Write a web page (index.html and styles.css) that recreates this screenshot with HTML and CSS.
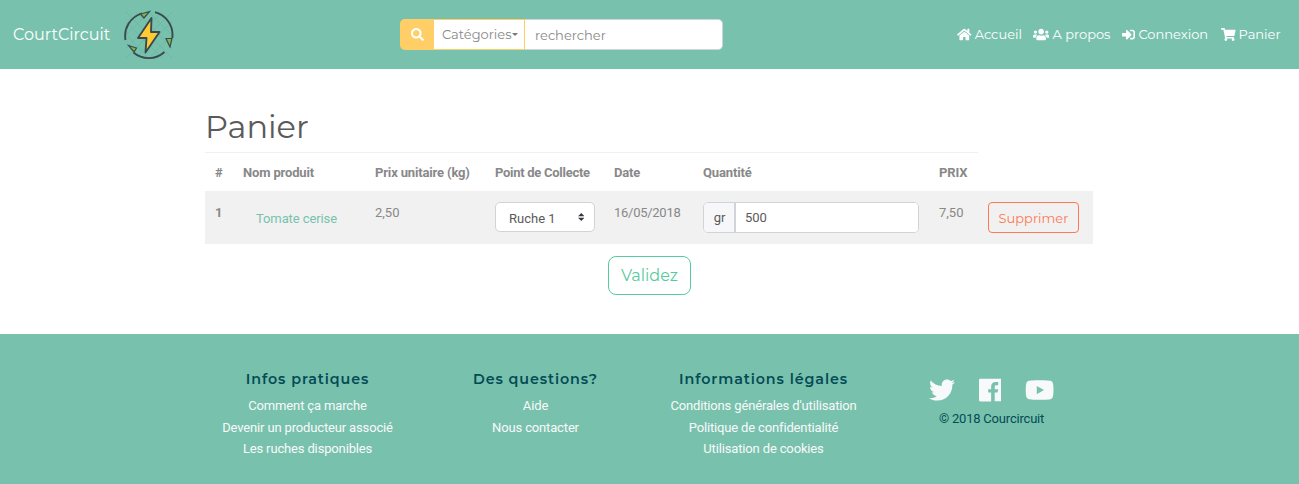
FILE: index.html
```
<!DOCTYPE html>
<html lang="fr">
<head>
<meta charset="utf-8">
<title>CourtCircuit - Panier</title>
<link rel="stylesheet" href="styles.css">
</head>
<body>
<header class="navbar">
  <a class="brand"><span class="brand-name">CourtCircuit</span>
    <svg class="logo" viewBox="0 0 50 50">
      <g class="logo-grid"><path d="M2 2L48 48M12 2L48 38M25 2L48 25M2 12L38 48M2 25L25 48M48 2L2 48M38 2L2 38M25 2L2 25M48 12L12 48M48 25L25 48"/></g>
      <g class="logo-ring"><path d="M1.500 30A23.500 23.500 0 0 1 18 3.300"/><path d="M31 2.200A23.500 23.500 0 0 1 48.300 28"/><path d="M40.500 42A23.500 23.500 0 0 1 9.500 42.500"/></g>
      <g class="logo-leaf"><path d="M16.500 4L25.500 1.500L20 8Z"/><path d="M42 28.500L48 28.500L46 37Z"/><path d="M4.500 35.500L12.500 38L10 42Z"/></g>
      <path class="logo-bolt" d="M27.500 8L14 28H22.500L21.500 42.500L35.500 22H27Z"/>
    </svg>
  </a>
  <form class="search">
    <span class="search-btn"><svg class="ico-search" viewBox="0 0 512 512"><path d="M505 442.700L405.300 343c-4.500-4.500-10.600-7-17-7H372c27.600-35.300 44-79.700 44-128C416 93.100 322.900 0 208 0S0 93.100 0 208s93.100 208 208 208c48.300 0 92.700-16.400 128-44v16.300c0 6.400 2.500 12.500 7 17l99.700 99.700c9.400 9.400 24.600 9.400 33.900 0l28.300-28.300c9.400-9.400 9.400-24.600.1-34zM208 336c-70.700 0-128-57.200-128-128 0-70.700 57.200-128 128-128 70.700 0 128 57.200 128 128 0 70.700-57.200 128-128 128z"/></svg></span>
    <span class="search-cat"><span>Catégories</span><i class="caret"></i></span>
    <input class="search-input" type="text" placeholder="rechercher">
  </form>
  <nav class="links">
    <a class="link-home"><svg viewBox="0 0 576 512"><path d="M280.370 148.260L96 300.110V464a16 16 0 0 0 16 16l112.060-.29a16 16 0 0 0 15.920-16V368a16 16 0 0 1 16-16h64a16 16 0 0 1 16 16v95.640a16 16 0 0 0 16 16.050L464 480a16 16 0 0 0 16-16V300L295.670 148.260a12.190 12.190 0 0 0-15.300 0zM571.600 251.470L488 182.560V44.050a12 12 0 0 0-12-12h-56a12 12 0 0 0-12 12v72.610L318.470 43a48 48 0 0 0-61 0L4.340 251.470a12 12 0 0 0-1.600 16.900l25.500 31A12 12 0 0 0 45.150 301l235.220-193.740a12.190 12.190 0 0 1 15.300 0L530.900 301a12 12 0 0 0 16.900-1.600l25.500-31a12 12 0 0 0-1.700-16.930z"/></svg><span>Accueil</span></a>
    <a class="link-about"><svg class="wide" viewBox="0 0 640 512"><path d="M96 224c35.300 0 64-28.700 64-64s-28.700-64-64-64-64 28.700-64 64 28.700 64 64 64zm448 0c35.300 0 64-28.700 64-64s-28.700-64-64-64-64 28.700-64 64 28.700 64 64 64zm32 32h-64c-17.600 0-33.500 7.100-45.100 18.600 40.300 22.100 68.900 62 75.100 109.400h66c17.700 0 32-14.300 32-32v-32c0-35.300-28.700-64-64-64zm-256 0c61.900 0 112-50.100 112-112S381.900 32 320 32 208 82.100 208 144s50.100 112 112 112zm76.800 32h-8.300c-20.800 10-43.900 16-68.500 16s-47.600-6-68.500-16h-8.300C179.600 288 128 339.600 128 403.200V432c0 26.500 21.500 48 48 48h288c26.500 0 48-21.500 48-48v-28.800c0-63.600-51.600-115.200-115.200-115.200zm-223.700-13.400C161.500 263.100 145.600 256 128 256H64c-35.300 0-64 28.700-64 64v32c0 17.700 14.300 32 32 32h65.900c6.300-47.400 34.900-87.300 75.200-109.400z"/></svg><span>A propos</span></a>
    <a class="link-login"><svg class="square" viewBox="0 0 512 512"><path d="M416 448h-84c-6.600 0-12-5.400-12-12v-40c0-6.600 5.400-12 12-12h84c17.700 0 32-14.300 32-32V160c0-17.700-14.300-32-32-32h-84c-6.600 0-12-5.400-12-12V76c0-6.600 5.400-12 12-12h84c53 0 96 43 96 96v192c0 53-43 96-96 96zm-47-201L201 79c-15-15-41-4.500-41 17v96H24c-13.300 0-24 10.700-24 24v96c0 13.300 10.700 24 24 24h136v96c0 21.500 26 32 41 17l168-168c9.300-9.400 9.300-24.600 0-34z"/></svg><span>Connexion</span></a>
    <a class="link-cart"><svg viewBox="0 0 576 512"><path d="M528.120 301.319l47.273-208C578.806 78.301 567.391 64 551.990 64H159.208l-9.166-44.810C147.758 8.021 137.930 0 126.529 0H24C10.745 0 0 10.745 0 24v16c0 13.255 10.745 24 24 24h69.883l70.248 343.435C147.325 417.100 136 435.222 136 456c0 30.928 25.072 56 56 56s56-25.072 56-56c0-15.674-6.447-29.835-16.824-40h209.647C430.447 426.165 424 440.326 424 456c0 30.928 25.072 56 56 56s56-25.072 56-56c0-22.172-12.888-41.332-31.579-50.405l5.517-24.276c3.413-15.018-8.002-29.319-23.403-29.319H218.117l-6.545-32h293.145c11.206 0 20.920-7.754 23.403-18.681z"/></svg><span>Panier</span></a>
  </nav>
</header>

<main class="content">
  <h1 class="title">Panier</h1>
  <table class="cart">
    <colgroup><col class="c-num"><col class="c-name"><col class="c-unit"><col class="c-point"><col class="c-date"><col class="c-qty"><col class="c-price"><col class="c-action"></colgroup>
    <thead>
      <tr><th>#</th><th>Nom produit</th><th>Prix unitaire (kg)</th><th>Point de Collecte</th><th>Date</th><th>Quantité</th><th>PRIX</th></tr>
    </thead>
    <tbody>
      <tr>
        <th>1</th>
        <td><a class="product">Tomate cerise</a></td>
        <td>2,50</td>
        <td><div class="select"><span>Ruche 1</span><svg viewBox="0 0 4 5"><path d="M2 0L0 2h4zM2 5L0 3h4z"/></svg></div></td>
        <td>16/05/2018</td>
        <td><div class="qty"><span class="unit">gr</span><input type="text" value="500"></div></td>
        <td>7,50</td>
        <td><button class="btn btn-delete" type="button">Supprimer</button></td>
      </tr>
    </tbody>
  </table>
  <button class="btn btn-validate" type="button">Validez</button>
</main>

<footer class="footer">
  <section class="foot-col"><h2>Infos pratiques</h2><a>Comment ça marche</a><a>Devenir un producteur associé</a><a>Les ruches disponibles</a></section>
  <section class="foot-col"><h2>Des questions?</h2><a>Aide</a><a>Nous contacter</a></section>
  <section class="foot-col"><h2>Informations légales</h2><a>Conditions générales d'utilisation</a><a>Politique de confidentialité</a><a>Utilisation de cookies</a></section>
  <section class="foot-col col-social">
    <div class="social">
      <svg class="tw" viewBox="0 0 512 512"><path d="M459.370 151.716c.325 4.548.325 9.097.325 13.645 0 138.720-105.583 298.558-298.558 298.558-59.452 0-114.680-17.219-161.137-47.106 8.447.974 16.568 1.299 25.340 1.299 49.055 0 94.213-16.568 130.274-44.832-46.132-.975-84.792-31.188-98.112-72.772 6.498.974 12.995 1.624 19.818 1.624 9.421 0 18.843-1.300 27.614-3.573-48.081-9.747-84.143-51.980-84.143-102.985v-1.299c13.969 7.797 30.214 12.670 47.431 13.319-28.264-18.843-46.781-51.005-46.781-87.391 0-19.492 5.197-37.360 14.294-52.954 51.655 63.675 129.300 105.258 216.365 109.807-1.624-7.797-2.599-15.918-2.599-24.040 0-57.828 46.782-104.934 104.934-104.934 30.213 0 57.502 12.670 76.670 33.137 23.715-4.548 46.456-13.320 66.599-25.340-7.798 24.366-24.366 44.833-46.132 57.827 21.117-2.273 41.584-8.122 60.426-16.243-14.292 20.791-32.161 39.308-52.628 54.253z"/></svg>
      <svg class="fb" viewBox="0 0 448 512"><path d="M448 56.700v398.500c0 13.700-11.100 24.700-24.700 24.700H309.100V306.500h58.200l8.700-67.600h-67v-43.200c0-19.600 5.400-32.900 33.500-32.900h35.800v-60.500c-6.200-.8-27.400-2.700-52.200-2.700-51.600 0-87 31.500-87 89.400v49.900h-58.400v67.600h58.400V480H24.700C11.100 480 0 468.900 0 455.300V56.700C0 43.100 11.100 32 24.700 32h398.500c13.700 0 24.800 11.100 24.800 24.700z"/></svg>
      <svg class="yt" viewBox="0 0 576 512"><path d="M549.655 124.083c-6.281-23.650-24.787-42.276-48.284-48.597C458.781 64 288 64 288 64S117.220 64 74.629 75.486c-23.497 6.322-42.003 24.947-48.284 48.597-11.412 42.867-11.412 132.305-11.412 132.305s0 89.438 11.412 132.305c6.281 23.650 24.787 41.500 48.284 47.821C117.220 448 288 448 288 448s170.780 0 213.371-11.486c23.497-6.321 42.003-24.171 48.284-47.821 11.412-42.867 11.412-132.305 11.412-132.305s0-89.438-11.412-132.305zm-317.510 213.508V175.185l142.739 81.205-142.739 81.201z"/></svg>
    </div>
    <p>© 2018 Courcircuit</p>
  </section>
</footer>
</body>
</html>
```
FILE: styles.css
```
* { box-sizing: border-box; }
body {
  margin: 0;
  font: 400 13px/19.5px Roboto, sans-serif;
  color: #888;
  background: #fff;
}
svg { display: block; fill: currentColor; flex: none; }
.brand, .search, .links, .title, .btn, .foot-col h2 { font-family: Montserrat, Inter, sans-serif; }

/* Top bar */
.navbar {
  display: grid;
  grid-template-columns: 387px 323px 1fr;
  align-items: center;
  height: 69px;
  padding: 0 19px 0 13px;
  background: #78c2ad;
  color: #fff;
}
.brand { display: flex; align-items: center; font-size: 16px; }
.brand-name { width: 111px; white-space: nowrap; }
.logo { width: 50px; height: 50px; }
.logo-grid { fill: none; stroke: #6bb09f; stroke-width: .6; }
.logo-ring { fill: none; stroke: #394b50; stroke-width: 1.900; }
.logo-leaf { fill: #80b548; stroke: #394b50; stroke-width: 1.200; }
.logo-bolt { fill: #ffca32; stroke: #394b50; stroke-width: 1.900; stroke-linejoin: round; }

.search { display: flex; height: 31px; color: #888; }
.search-btn {
  display: flex; align-items: center; justify-content: center;
  width: 34px; background: #ffce67; color: #fff; border-radius: 5px 0 0 5px;
}
.ico-search { width: 13px; height: 13px; }
.search-cat {
  display: flex; align-items: center;
  width: 91px; padding-left: 8px;
  background: #fff; border: solid #ffce67; border-width: 1px 1px 1px 0;
}
.search-cat span { width: 70px; }
.caret { border: solid transparent; border-width: 3px 3px 0; border-top-color: #777; }
.search-input {
  width: 198px; padding: 0 10px; margin: 0;
  border: 1px solid #ced4da; border-left: 0; border-radius: 0 5px 5px 0;
  font: 400 13px Montserrat, Inter, sans-serif;
}
.search-input::placeholder { color: #888; opacity: 1; }

.links { display: flex; justify-content: flex-end; gap: 12.500px; }
.links a { display: flex; align-items: center; gap: 3px; white-space: nowrap; }
.links svg { width: 14.600px; height: 13px; }
.links .wide { width: 16.250px; }
.links .square { width: 13px; }
.link-home span { width: 46px; }
.link-about span { width: 57.500px; }
.link-login span { width: 70px; }
.link-cart span { width: 41.500px; }

/* Basket */
.content { display: flex; flex-direction: column; height: 265px; padding: 39px 205px 0; }
.title { margin: 0; height: 44px; font-size: 32px; line-height: 38px; font-weight: 400; color: #5a5a5a; }
.cart { width: 888px; table-layout: fixed; border-collapse: separate; border-spacing: 0; }
.c-num { width: 28px; } .c-name { width: 132px; } .c-unit { width: 120px; } .c-point { width: 119px; }
.c-date { width: 89px; } .c-qty { width: 236px; } .c-price { width: 49px; } .c-action { width: 115px; }
.cart th, .cart td { padding: 10px 0 0 10px; text-align: left; vertical-align: top; white-space: nowrap; }
.cart th { font-weight: 700; letter-spacing: -.15px; }
.cart thead th:nth-child(4) { letter-spacing: -.28px; }
.cart thead th { height: 39px; border-top: 1px solid #f0f0f0; }
.cart tbody tr { height: 53px; background: #f1f1f1; }
.cart tbody th, .cart tbody td { padding-top: 12px; }
.cart tbody td:nth-child(4), .cart tbody td:nth-child(6), .cart tbody td:nth-child(8) { padding-top: 11px; }
.cart tbody td:nth-child(5) { letter-spacing: -.27px; }
.product { display: block; padding: 6px 13px; color: #78c2ad; letter-spacing: -.1px; }
.select {
  display: flex; align-items: center; justify-content: space-between;
  width: 100px; height: 30px; padding: 3px 10px 0 13px;
  background: #fff; border: 1px solid #ced4da; border-radius: 5px; color: #5a5a5a;
}
.select svg { width: 6.500px; height: 8px; margin-top: -4px; fill: #343a40; }
.qty { display: flex; width: 216px; height: 31px; border: 1px solid #ced4da; border-radius: 5px; background: #fff; overflow: hidden; color: #5a5a5a; }
.unit { width: 32px; padding: 5px 0 0 1px; text-align: center; background: #f7f7f9; border-right: 2px solid #ced4da; }
.qty input { flex: 1; min-width: 0; border: 0; padding: 0 9px; font: inherit; color: inherit; }
.btn { display: block; padding: 0; background: transparent; border: 1px solid; white-space: nowrap; font-weight: 400; }
.btn-delete { width: 91px; height: 31px; border-radius: 4px; color: #ff7851; font-size: 13px; }
.btn-validate { align-self: center; width: 83px; height: 39px; margin: 12px 0 0; border-radius: 8px; color: #56cc9d; font-size: 16px; }

/* Footer */
.footer {
  display: grid;
  grid-template-columns: repeat(4, 228px);
  padding: 36px 0 0 193.500px;
  height: 150px;
  background: #78c2ad;
}
.foot-col { display: flex; flex-direction: column; align-items: center; text-align: center; white-space: nowrap; color: #f8f9fa; }
.foot-col h2 { margin: 0 0 7px; font-size: 14.300px; line-height: 18px; font-weight: 600; color: #044b55; letter-spacing: .9px; }
.foot-col a { height: 21.500px; line-height: 21.500px; letter-spacing: -.15px; }
.foot-col p { margin: 6px 0 0; color: #044b55; letter-spacing: -.2px; }
.col-social { padding-top: 7px; }
.social { display: flex; gap: 24px; }
.social svg { height: 26px; }
.social .tw { width: 26px; } .social .fb { width: 22.750px; } .social .yt { width: 29.250px; }
```
